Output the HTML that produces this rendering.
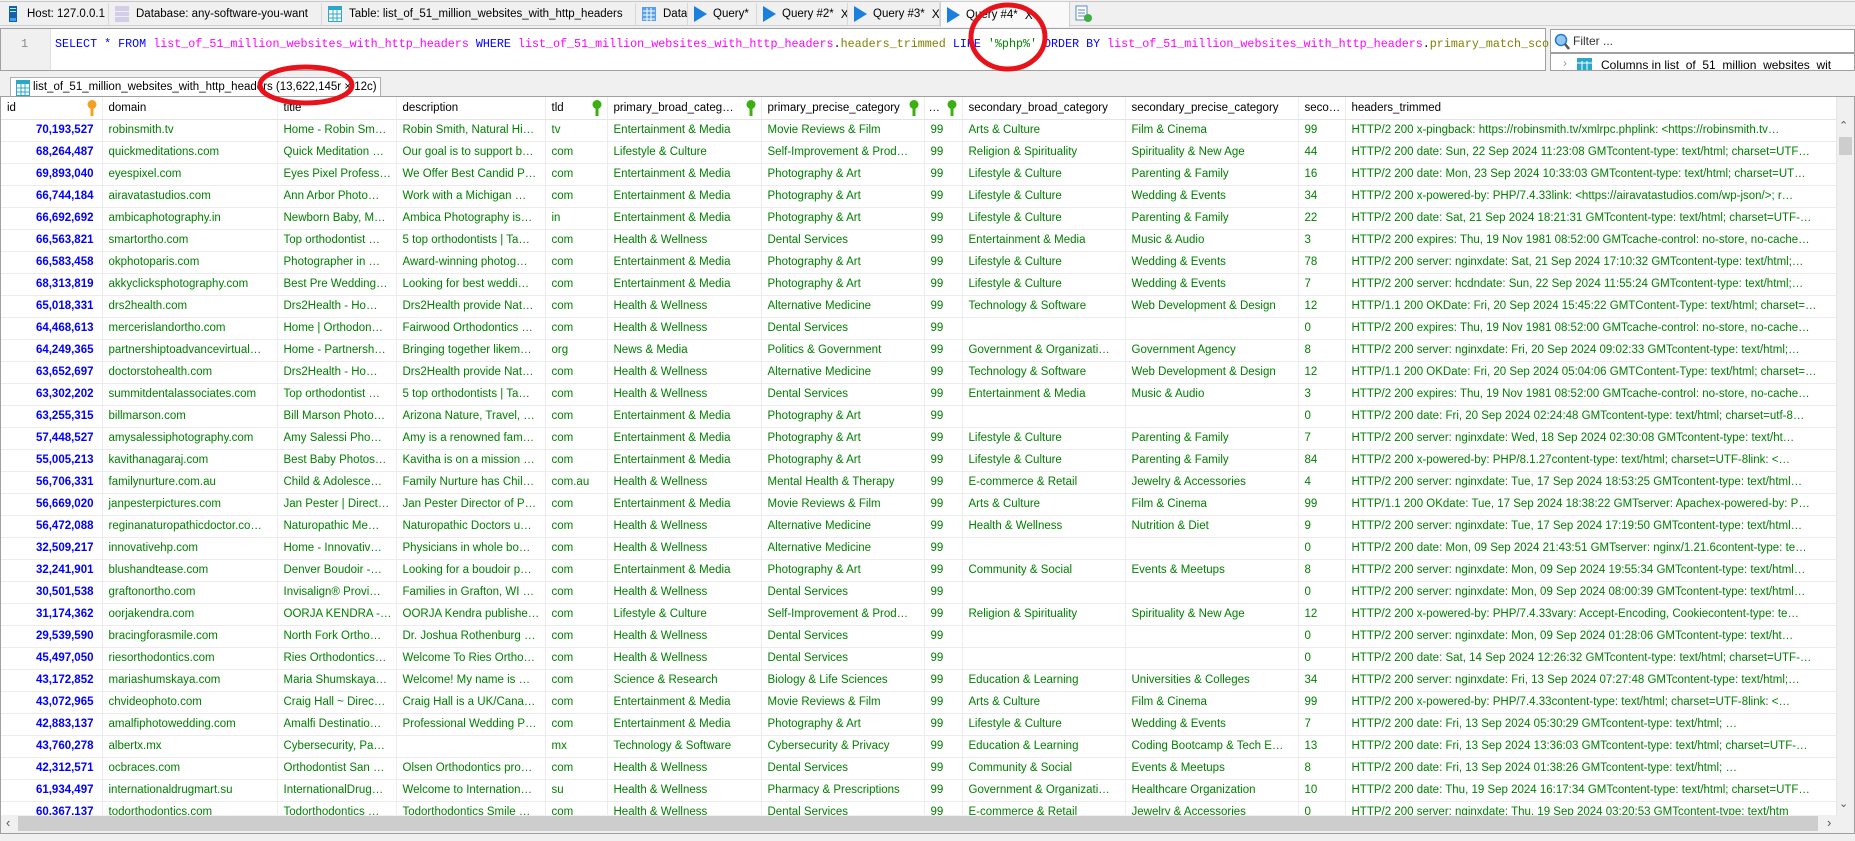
<!DOCTYPE html>
<html><head><meta charset="utf-8">
<style>
*{margin:0;padding:0;box-sizing:border-box}
body{width:1855px;height:841px;overflow:hidden;background:#f0f0f0;font-family:"Liberation Sans",sans-serif;font-size:12px;color:#000;position:relative}
.abs{position:absolute}
.tab{position:absolute;top:3px;height:22px;border-right:1px solid #d8d8d8;display:flex;align-items:center;font-size:11.5px;white-space:nowrap;padding-left:6px;overflow:hidden}
.ic{display:inline-block;width:14px;height:16px;margin-right:7px;flex:none}
.play{width:0;height:0;border-top:8px solid transparent;border-bottom:8px solid transparent;border-left:13px solid #1b7fe0;margin-right:6px;display:inline-block;flex:none}
.x{margin-left:7px;font-size:12px}
#sql{left:0;top:28px;width:1546px;height:43px;background:#fff;border:1px solid #a0a0a0}
#gut{left:0;top:0;width:50px;height:41px;background:#f0f0f0;border-right:1px solid #e0e0e0;text-align:right;padding-right:22px;padding-top:8px;font-family:"Liberation Mono",monospace;font-size:11.7px;color:#888}
#code{left:54px;top:8px;font-family:"Liberation Mono",monospace;font-size:11.7px;white-space:pre;color:#000}
.k{color:#0000ff}.t{color:#ff00ff}.c{color:#808000}.s{color:#008000}
#grid{left:0;top:96px;width:1855px;height:738px;background:#fff;border:1px solid #a0a0a0;overflow:hidden}
table{border-collapse:collapse;table-layout:fixed;position:absolute;left:0;top:0;width:1836px}
td,th{height:22px;border-right:1px solid #ececec;border-bottom:1px solid #ececec;white-space:nowrap;overflow:hidden;text-overflow:ellipsis;padding:0 4px 0 6px;font-size:11.5px;text-align:left;font-weight:normal}
th{color:#000;font-size:11.5px;border-bottom:1px solid #e4e4e4;position:relative;padding-right:14px}
td{color:#008000}
td.id{color:#0000ff;font-weight:bold;text-align:right;padding-right:8px;font-size:11.5px}
.key{position:absolute;right:5px;top:3px;width:10px;height:16px}
</style></head><body>
<div class="abs" style="left:0;top:1px;width:1855px;height:1px;background:#c8c8c8"></div>
<div class="abs" style="left:0;top:25px;width:1855px;height:1px;background:#d0d0d0"></div>
<div class="tab" style="left:0;width:109px"><svg class="ic" viewBox="0 0 14 16"><rect x="3" y="0" width="8" height="16" fill="#1a5ea8"/><rect x="4" y="2" width="6" height="1" fill="#8fd"/><rect x="4" y="5" width="6" height="1" fill="#8fd"/><rect x="4" y="12" width="6" height="3" fill="#3aa0ff"/></svg>Host: 127.0.0.1</div>
<div class="tab" style="left:109px;width:213px"><svg class="ic" viewBox="0 0 14 16"><rect x="0" y="0" width="14" height="16" fill="#d4cdea"/><rect x="0" y="5" width="14" height="1" fill="#eee"/><rect x="0" y="10" width="14" height="1" fill="#eee"/></svg>Database: any-software-you-want</div>
<div class="tab" style="left:322px;width:314px"><svg class="ic" viewBox="0 0 14 16"><rect x="0" y="0" width="14" height="16" fill="#2aa8c8"/><rect x="1" y="4" width="12" height="11" fill="#fff"/><path d="M5 4v11M9 4v11M1 8h12M1 12h12" stroke="#2aa8c8"/></svg>Table: list_of_51_million_websites_with_http_headers</div>
<div class="tab" style="left:636px;width:52px"><svg class="ic" viewBox="0 0 14 16"><rect x="0" y="1" width="14" height="14" fill="#5aa0e8"/><path d="M1 5h12M1 9h12M1 13h12M5 2v13M9 2v13" stroke="#fff"/></svg>Data</div>
<div class="tab" style="left:688px;width:69px"><span class="play"></span>Query*</div>
<div class="tab" style="left:757px;width:91px"><span class="play"></span>Query #2*<span class="x">X</span></div>
<div class="tab" style="left:848px;width:92px"><span class="play"></span>Query #3*<span class="x">X</span></div>
<div class="tab" style="left:940px;top:1px;height:26px;width:130px;background:#f9f9f9;border:1px solid #d0d0d0;border-bottom:none"><span class="play"></span>Query #4*<span class="x">X</span></div>
<svg class="abs" style="left:1075px;top:5px" width="18" height="18" viewBox="0 0 18 18"><rect x="1" y="1" width="11" height="14" fill="#fff" stroke="#5a8ac0"/><path d="M3 5h7M3 8h7M3 11h7" stroke="#5a8ac0"/><circle cx="13" cy="13" r="4" fill="#3cb043"/></svg>

<div id="sql" class="abs">
<div id="gut" class="abs">1</div>
<div id="code" class="abs"><span class="k">SELECT</span> <span class="k">*</span> <span class="k">FROM</span> <span class="t">list_of_51_million_websites_with_http_headers</span> <span class="k">WHERE</span> <span class="t">list_of_51_million_websites_with_http_headers</span>.<span class="c">headers_trimmed</span> <span class="k">LIKE</span> <span class="s">'%php%'</span> <span class="k">ORDER BY</span> <span class="t">list_of_51_million_websites_with_http_headers</span>.<span class="c">primary_match_sco</span></div>
</div>
<div class="abs" style="left:1550px;top:29px;width:305px;height:24px;background:#fff;border:1px solid #a0a0a0;font-size:12px;padding:4px 0 0 22px;color:#333">Filter ...
<svg class="abs" style="left:3px;top:3px" width="16" height="17" viewBox="0 0 16 17"><circle cx="7" cy="7" r="5.5" fill="#8fc8f8" stroke="#2a78c8" stroke-width="1.5"/><path d="M11 11l4 5" stroke="#555" stroke-width="2.5"/></svg></div>
<div class="abs" style="left:1550px;top:53px;width:305px;height:18px;background:#fff;border:1px solid #a0a0a0;overflow:hidden;font-size:12px;padding:4px 0 0 50px;color:#000;white-space:nowrap">Columns in list_of_51_million_websites_wit
<span class="abs" style="left:12px;top:2px;color:#999">›</span>
<svg class="abs" style="left:26px;top:4px" width="15" height="12"><rect width="15" height="12" fill="#2aa8c8"/><path d="M0 5h15M5 3v9M10 3v9" stroke="#fff"/></svg></div>

<div class="abs" style="left:10px;top:77px;width:371px;height:20px;background:#fff;border:1px solid #b0b0b0;border-bottom:none;font-size:11.5px;padding:3px 0 0 22px;white-space:nowrap;overflow:hidden">list_of_51_million_websites_with_http_headers (13,622,145r × 12c)
<svg class="abs" style="left:5px;top:2px" width="14" height="16" viewBox="0 0 14 16"><rect width="14" height="16" fill="#2aa8c8"/><rect x="1" y="4" width="12" height="11" fill="#fff"/><path d="M5 4v11M9 4v11M1 8h12M1 12h12" stroke="#2aa8c8"/></svg></div>

<div id="grid" class="abs">
<table>
<colgroup><col style="width:101px"><col style="width:175px"><col style="width:119px"><col style="width:149px"><col style="width:62px"><col style="width:154px"><col style="width:163px"><col style="width:38px"><col style="width:163px"><col style="width:173px"><col style="width:47px"><col style="width:492px"></colgroup>
<tr><th>id<svg class="key" viewBox="0 0 10 16"><circle cx="5" cy="4.5" r="4.5" fill="#f5a020"/><rect x="3.5" y="7" width="3" height="9" fill="#f5a020"/></svg></th><th>domain</th><th>title</th><th>description</th><th>tld<svg class="key" viewBox="0 0 10 16"><circle cx="5" cy="4.5" r="4.5" fill="#3cb010"/><rect x="3.5" y="7" width="3" height="9" fill="#3cb010"/></svg></th><th>primary_broad_categ…<svg class="key" viewBox="0 0 10 16"><circle cx="5" cy="4.5" r="4.5" fill="#3cb010"/><rect x="3.5" y="7" width="3" height="9" fill="#3cb010"/></svg></th><th>primary_precise_category<svg class="key" viewBox="0 0 10 16"><circle cx="5" cy="4.5" r="4.5" fill="#3cb010"/><rect x="3.5" y="7" width="3" height="9" fill="#3cb010"/></svg></th><th style="padding-left:4px">…<svg class="key" viewBox="0 0 10 16"><circle cx="5" cy="4.5" r="4.5" fill="#3cb010"/><rect x="3.5" y="7" width="3" height="9" fill="#3cb010"/></svg></th><th>secondary_broad_category</th><th>secondary_precise_category</th><th style="padding-right:2px">seco…</th><th>headers_trimmed</th></tr>
<tr><td class="id">70,193,527</td><td>robinsmith.tv</td><td>Home - Robin Sm…</td><td>Robin Smith, Natural Hi…</td><td>tv</td><td>Entertainment &amp; Media</td><td>Movie Reviews &amp; Film</td><td>99</td><td>Arts &amp; Culture</td><td>Film &amp; Cinema</td><td>99</td><td>HTTP/2 200 x-pingback: https://robinsmith.tv/xmlrpc.phplink: &lt;https://robinsmith.tv…</td></tr>
<tr><td class="id">68,264,487</td><td>quickmeditations.com</td><td>Quick Meditation …</td><td>Our goal is to support b…</td><td>com</td><td>Lifestyle &amp; Culture</td><td>Self-Improvement &amp; Prod…</td><td>99</td><td>Religion &amp; Spirituality</td><td>Spirituality &amp; New Age</td><td>44</td><td>HTTP/2 200 date: Sun, 22 Sep 2024 11:23:08 GMTcontent-type: text/html; charset=UTF…</td></tr>
<tr><td class="id">69,893,040</td><td>eyespixel.com</td><td>Eyes Pixel Professi…</td><td>We Offer Best Candid P…</td><td>com</td><td>Entertainment &amp; Media</td><td>Photography &amp; Art</td><td>99</td><td>Lifestyle &amp; Culture</td><td>Parenting &amp; Family</td><td>16</td><td>HTTP/2 200 date: Mon, 23 Sep 2024 10:33:03 GMTcontent-type: text/html; charset=UT…</td></tr>
<tr><td class="id">66,744,184</td><td>airavatastudios.com</td><td>Ann Arbor Photo…</td><td>Work with a Michigan …</td><td>com</td><td>Entertainment &amp; Media</td><td>Photography &amp; Art</td><td>99</td><td>Lifestyle &amp; Culture</td><td>Wedding &amp; Events</td><td>34</td><td>HTTP/2 200 x-powered-by: PHP/7.4.33link: &lt;https://airavatastudios.com/wp-json/&gt;; r…</td></tr>
<tr><td class="id">66,692,692</td><td>ambicaphotography.in</td><td>Newborn Baby, M…</td><td>Ambica Photography is…</td><td>in</td><td>Entertainment &amp; Media</td><td>Photography &amp; Art</td><td>99</td><td>Lifestyle &amp; Culture</td><td>Parenting &amp; Family</td><td>22</td><td>HTTP/2 200 date: Sat, 21 Sep 2024 18:21:31 GMTcontent-type: text/html; charset=UTF-…</td></tr>
<tr><td class="id">66,563,821</td><td>smartortho.com</td><td>Top orthodontist …</td><td>5 top orthodontists | Ta…</td><td>com</td><td>Health &amp; Wellness</td><td>Dental Services</td><td>99</td><td>Entertainment &amp; Media</td><td>Music &amp; Audio</td><td>3</td><td>HTTP/2 200 expires: Thu, 19 Nov 1981 08:52:00 GMTcache-control: no-store, no-cache…</td></tr>
<tr><td class="id">66,583,458</td><td>okphotoparis.com</td><td>Photographer in …</td><td>Award-winning photog…</td><td>com</td><td>Entertainment &amp; Media</td><td>Photography &amp; Art</td><td>99</td><td>Lifestyle &amp; Culture</td><td>Wedding &amp; Events</td><td>78</td><td>HTTP/2 200 server: nginxdate: Sat, 21 Sep 2024 17:10:32 GMTcontent-type: text/html;…</td></tr>
<tr><td class="id">68,313,819</td><td>akkyclicksphotography.com</td><td>Best Pre Wedding…</td><td>Looking for best weddi…</td><td>com</td><td>Entertainment &amp; Media</td><td>Photography &amp; Art</td><td>99</td><td>Lifestyle &amp; Culture</td><td>Wedding &amp; Events</td><td>7</td><td>HTTP/2 200 server: hcdndate: Sun, 22 Sep 2024 11:55:24 GMTcontent-type: text/html;…</td></tr>
<tr><td class="id">65,018,331</td><td>drs2health.com</td><td>Drs2Health - Ho…</td><td>Drs2Health provide Nat…</td><td>com</td><td>Health &amp; Wellness</td><td>Alternative Medicine</td><td>99</td><td>Technology &amp; Software</td><td>Web Development &amp; Design</td><td>12</td><td>HTTP/1.1 200 OKDate: Fri, 20 Sep 2024 15:45:22 GMTContent-Type: text/html; charset=…</td></tr>
<tr><td class="id">64,468,613</td><td>mercerislandortho.com</td><td>Home | Orthodon…</td><td>Fairwood Orthodontics …</td><td>com</td><td>Health &amp; Wellness</td><td>Dental Services</td><td>99</td><td></td><td></td><td>0</td><td>HTTP/2 200 expires: Thu, 19 Nov 1981 08:52:00 GMTcache-control: no-store, no-cache…</td></tr>
<tr><td class="id">64,249,365</td><td>partnershiptoadvancevirtual…</td><td>Home - Partnersh…</td><td>Bringing together likem…</td><td>org</td><td>News &amp; Media</td><td>Politics &amp; Government</td><td>99</td><td>Government &amp; Organizati…</td><td>Government Agency</td><td>8</td><td>HTTP/2 200 server: nginxdate: Fri, 20 Sep 2024 09:02:33 GMTcontent-type: text/html;…</td></tr>
<tr><td class="id">63,652,697</td><td>doctorstohealth.com</td><td>Drs2Health - Ho…</td><td>Drs2Health provide Nat…</td><td>com</td><td>Health &amp; Wellness</td><td>Alternative Medicine</td><td>99</td><td>Technology &amp; Software</td><td>Web Development &amp; Design</td><td>12</td><td>HTTP/1.1 200 OKDate: Fri, 20 Sep 2024 05:04:06 GMTContent-Type: text/html; charset=…</td></tr>
<tr><td class="id">63,302,202</td><td>summitdentalassociates.com</td><td>Top orthodontist …</td><td>5 top orthodontists | Ta…</td><td>com</td><td>Health &amp; Wellness</td><td>Dental Services</td><td>99</td><td>Entertainment &amp; Media</td><td>Music &amp; Audio</td><td>3</td><td>HTTP/2 200 expires: Thu, 19 Nov 1981 08:52:00 GMTcache-control: no-store, no-cache…</td></tr>
<tr><td class="id">63,255,315</td><td>billmarson.com</td><td>Bill Marson Photo…</td><td>Arizona Nature, Travel, …</td><td>com</td><td>Entertainment &amp; Media</td><td>Photography &amp; Art</td><td>99</td><td></td><td></td><td>0</td><td>HTTP/2 200 date: Fri, 20 Sep 2024 02:24:48 GMTcontent-type: text/html; charset=utf-8…</td></tr>
<tr><td class="id">57,448,527</td><td>amysalessiphotography.com</td><td>Amy Salessi Pho…</td><td>Amy is a renowned fam…</td><td>com</td><td>Entertainment &amp; Media</td><td>Photography &amp; Art</td><td>99</td><td>Lifestyle &amp; Culture</td><td>Parenting &amp; Family</td><td>7</td><td>HTTP/2 200 server: nginxdate: Wed, 18 Sep 2024 02:30:08 GMTcontent-type: text/ht…</td></tr>
<tr><td class="id">55,005,213</td><td>kavithanagaraj.com</td><td>Best Baby Photos…</td><td>Kavitha is on a mission …</td><td>com</td><td>Entertainment &amp; Media</td><td>Photography &amp; Art</td><td>99</td><td>Lifestyle &amp; Culture</td><td>Parenting &amp; Family</td><td>84</td><td>HTTP/2 200 x-powered-by: PHP/8.1.27content-type: text/html; charset=UTF-8link: &lt;…</td></tr>
<tr><td class="id">56,706,331</td><td>familynurture.com.au</td><td>Child &amp; Adolesce…</td><td>Family Nurture has Chil…</td><td>com.au</td><td>Health &amp; Wellness</td><td>Mental Health &amp; Therapy</td><td>99</td><td>E-commerce &amp; Retail</td><td>Jewelry &amp; Accessories</td><td>4</td><td>HTTP/2 200 server: nginxdate: Tue, 17 Sep 2024 18:53:25 GMTcontent-type: text/html…</td></tr>
<tr><td class="id">56,669,020</td><td>janpesterpictures.com</td><td>Jan Pester | Director of P…</td><td>Jan Pester Director of P…</td><td>com</td><td>Entertainment &amp; Media</td><td>Movie Reviews &amp; Film</td><td>99</td><td>Arts &amp; Culture</td><td>Film &amp; Cinema</td><td>99</td><td>HTTP/1.1 200 OKdate: Tue, 17 Sep 2024 18:38:22 GMTserver: Apachex-powered-by: P…</td></tr>
<tr><td class="id">56,472,088</td><td>reginanaturopathicdoctor.co…</td><td>Naturopathic Me…</td><td>Naturopathic Doctors u…</td><td>com</td><td>Health &amp; Wellness</td><td>Alternative Medicine</td><td>99</td><td>Health &amp; Wellness</td><td>Nutrition &amp; Diet</td><td>9</td><td>HTTP/2 200 server: nginxdate: Tue, 17 Sep 2024 17:19:50 GMTcontent-type: text/html…</td></tr>
<tr><td class="id">32,509,217</td><td>innovativehp.com</td><td>Home - Innovativ…</td><td>Physicians in whole bo…</td><td>com</td><td>Health &amp; Wellness</td><td>Alternative Medicine</td><td>99</td><td></td><td></td><td>0</td><td>HTTP/2 200 date: Mon, 09 Sep 2024 21:43:51 GMTserver: nginx/1.21.6content-type: te…</td></tr>
<tr><td class="id">32,241,901</td><td>blushandtease.com</td><td>Denver Boudoir -…</td><td>Looking for a boudoir p…</td><td>com</td><td>Entertainment &amp; Media</td><td>Photography &amp; Art</td><td>99</td><td>Community &amp; Social</td><td>Events &amp; Meetups</td><td>8</td><td>HTTP/2 200 server: nginxdate: Mon, 09 Sep 2024 19:55:34 GMTcontent-type: text/html…</td></tr>
<tr><td class="id">30,501,538</td><td>graftonortho.com</td><td>Invisalign® Provi…</td><td>Families in Grafton, WI …</td><td>com</td><td>Health &amp; Wellness</td><td>Dental Services</td><td>99</td><td></td><td></td><td>0</td><td>HTTP/2 200 server: nginxdate: Mon, 09 Sep 2024 08:00:39 GMTcontent-type: text/html…</td></tr>
<tr><td class="id">31,174,362</td><td>oorjakendra.com</td><td>OORJA KENDRA -…</td><td>OORJA Kendra publishe…</td><td>com</td><td>Lifestyle &amp; Culture</td><td>Self-Improvement &amp; Prod…</td><td>99</td><td>Religion &amp; Spirituality</td><td>Spirituality &amp; New Age</td><td>12</td><td>HTTP/2 200 x-powered-by: PHP/7.4.33vary: Accept-Encoding, Cookiecontent-type: te…</td></tr>
<tr><td class="id">29,539,590</td><td>bracingforasmile.com</td><td>North Fork Ortho…</td><td>Dr. Joshua Rothenburg …</td><td>com</td><td>Health &amp; Wellness</td><td>Dental Services</td><td>99</td><td></td><td></td><td>0</td><td>HTTP/2 200 server: nginxdate: Mon, 09 Sep 2024 01:28:06 GMTcontent-type: text/ht…</td></tr>
<tr><td class="id">45,497,050</td><td>riesorthodontics.com</td><td>Ries Orthodontics…</td><td>Welcome To Ries Ortho…</td><td>com</td><td>Health &amp; Wellness</td><td>Dental Services</td><td>99</td><td></td><td></td><td>0</td><td>HTTP/2 200 date: Sat, 14 Sep 2024 12:26:32 GMTcontent-type: text/html; charset=UTF-…</td></tr>
<tr><td class="id">43,172,852</td><td>mariashumskaya.com</td><td>Maria Shumskaya…</td><td>Welcome! My name is …</td><td>com</td><td>Science &amp; Research</td><td>Biology &amp; Life Sciences</td><td>99</td><td>Education &amp; Learning</td><td>Universities &amp; Colleges</td><td>34</td><td>HTTP/2 200 server: nginxdate: Fri, 13 Sep 2024 07:27:48 GMTcontent-type: text/html;…</td></tr>
<tr><td class="id">43,072,965</td><td>chvideophoto.com</td><td>Craig Hall ~ Direc…</td><td>Craig Hall is a UK/Cana…</td><td>com</td><td>Entertainment &amp; Media</td><td>Movie Reviews &amp; Film</td><td>99</td><td>Arts &amp; Culture</td><td>Film &amp; Cinema</td><td>99</td><td>HTTP/2 200 x-powered-by: PHP/7.4.33content-type: text/html; charset=UTF-8link: &lt;…</td></tr>
<tr><td class="id">42,883,137</td><td>amalfiphotowedding.com</td><td>Amalfi Destinatio…</td><td>Professional Wedding P…</td><td>com</td><td>Entertainment &amp; Media</td><td>Photography &amp; Art</td><td>99</td><td>Lifestyle &amp; Culture</td><td>Wedding &amp; Events</td><td>7</td><td>HTTP/2 200 date: Fri, 13 Sep 2024 05:30:29 GMTcontent-type: text/html; …</td></tr>
<tr><td class="id">43,760,278</td><td>albertx.mx</td><td>Cybersecurity, Pa…</td><td></td><td>mx</td><td>Technology &amp; Software</td><td>Cybersecurity &amp; Privacy</td><td>99</td><td>Education &amp; Learning</td><td>Coding Bootcamp &amp; Tech E…</td><td>13</td><td>HTTP/2 200 date: Fri, 13 Sep 2024 13:36:03 GMTcontent-type: text/html; charset=UTF-…</td></tr>
<tr><td class="id">42,312,571</td><td>ocbraces.com</td><td>Orthodontist San …</td><td>Olsen Orthodontics pro…</td><td>com</td><td>Health &amp; Wellness</td><td>Dental Services</td><td>99</td><td>Community &amp; Social</td><td>Events &amp; Meetups</td><td>8</td><td>HTTP/2 200 date: Fri, 13 Sep 2024 01:38:26 GMTcontent-type: text/html; …</td></tr>
<tr><td class="id">61,934,497</td><td>internationaldrugmart.su</td><td>InternationalDrug…</td><td>Welcome to Internation…</td><td>su</td><td>Health &amp; Wellness</td><td>Pharmacy &amp; Prescriptions</td><td>99</td><td>Government &amp; Organizati…</td><td>Healthcare Organization</td><td>10</td><td>HTTP/2 200 date: Thu, 19 Sep 2024 16:17:34 GMTcontent-type: text/html; charset=UTF…</td></tr>
<tr><td class="id">60,367,137</td><td>todorthodontics.com</td><td>Todorthodontics …</td><td>Todorthodontics Smile …</td><td>com</td><td>Health &amp; Wellness</td><td>Dental Services</td><td>99</td><td>E-commerce &amp; Retail</td><td>Jewelry &amp; Accessories</td><td>0</td><td>HTTP/2 200 server: nginxdate: Thu, 19 Sep 2024 03:20:53 GMTcontent-type: text/htm</td></tr>
</table>
<div class="abs" style="left:1835px;top:0;width:18px;height:718px;background:#f0f0f0;border-left:1px solid #e6e6e6"></div>
<div class="abs" style="left:1838px;top:22px;font-size:11px;color:#555">&#8963;</div>
<div class="abs" style="left:1838px;top:40px;width:13px;height:18px;background:#cdcdcd"></div>
<div class="abs" style="left:1838px;top:700px;font-size:11px;color:#555">&#8964;</div>
<div class="abs" style="left:0;top:718px;width:1853px;height:18px;background:#f0f0f0"></div>
<div class="abs" style="left:17px;top:719px;width:1800px;height:15px;background:#cdcdcd"></div>
<div class="abs" style="left:5px;top:718px;font-size:13px;color:#555">‹</div>
<div class="abs" style="left:1826px;top:718px;font-size:13px;color:#555">›</div>
</div>

<svg class="abs" style="left:0;top:0" width="1855" height="841">
<ellipse cx="1008" cy="37" rx="37" ry="32" fill="none" stroke="#e8131a" stroke-width="5"/>
<ellipse cx="306" cy="85" rx="46" ry="18" fill="none" stroke="#e8131a" stroke-width="5"/>
</svg>
</body></html>
